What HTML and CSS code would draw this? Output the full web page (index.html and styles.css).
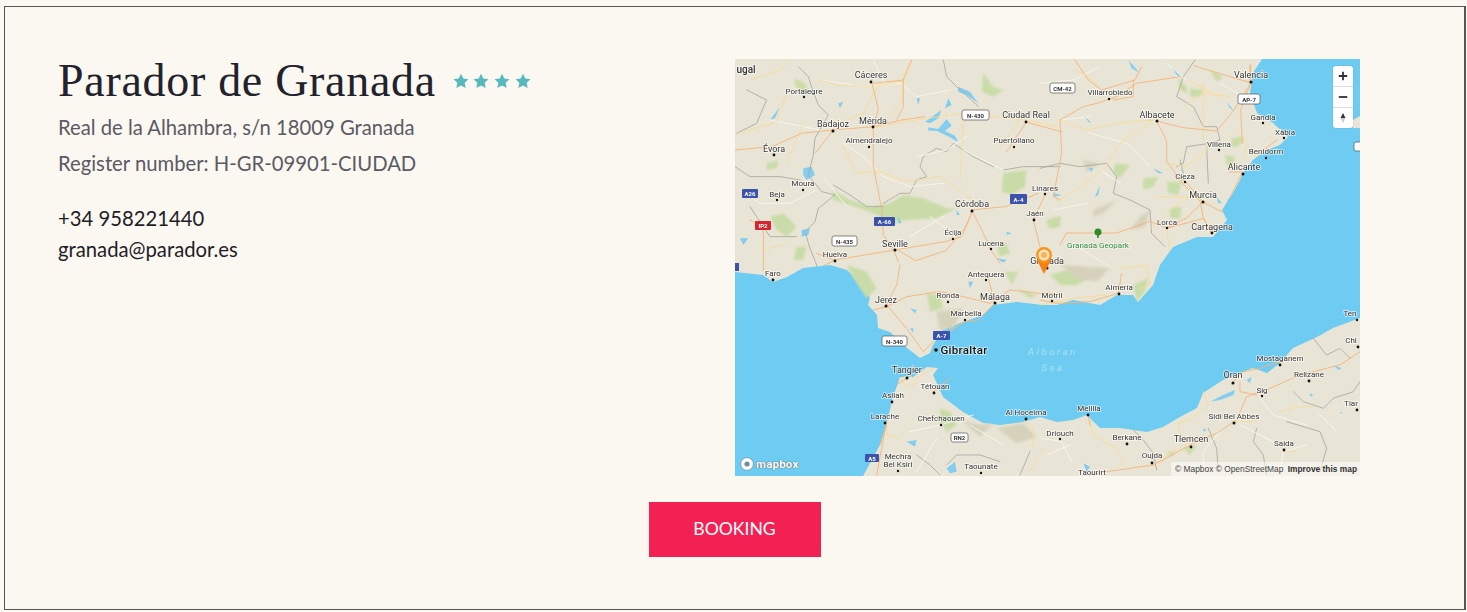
FILE: index.html
```html
<!DOCTYPE html>
<html lang="en">
<head>
<meta charset="utf-8">
<title>Parador de Granada</title>
<link rel="stylesheet" href="styles.css">
</head>
<body>
<main class="frame">
  <div class="columns">
    <section class="info">
      <div class="heading">
        <h1 class="name">Parador de Granada</h1>
        <div class="stars">
          <svg class="star" viewBox="0 0 24 24"><path d="M12 1l3.4 7.2 7.8 1-5.7 5.4 1.5 7.8L12 18.6l-7 3.8 1.5-7.8L.8 9.2l7.8-1z"/></svg>
          <svg class="star" viewBox="0 0 24 24"><path d="M12 1l3.4 7.2 7.8 1-5.7 5.4 1.5 7.8L12 18.6l-7 3.8 1.5-7.8L.8 9.2l7.8-1z"/></svg>
          <svg class="star" viewBox="0 0 24 24"><path d="M12 1l3.4 7.2 7.8 1-5.7 5.4 1.5 7.8L12 18.6l-7 3.8 1.5-7.8L.8 9.2l7.8-1z"/></svg>
          <svg class="star" viewBox="0 0 24 24"><path d="M12 1l3.4 7.2 7.8 1-5.7 5.4 1.5 7.8L12 18.6l-7 3.8 1.5-7.8L.8 9.2l7.8-1z"/></svg>
        </div>
      </div>
      <p class="meta">Real de la Alhambra, s/n 18009 Granada</p>
      <p class="meta">Register number: H-GR-09901-CIUDAD</p>
      <p class="phone">+34 958221440</p>
      <p class="email">granada@parador.es</p>
    </section>
    <section class="map">
      <svg class="map-canvas" viewBox="735 59 625 417" xmlns="http://www.w3.org/2000/svg">
        <rect class="land" x="735" y="59" width="625" height="417"/>

        <g transform="translate(730 50) scale(.3333)">
          <path class="green" d="M820 370l70-10-5 50-40 25-30-10z"/>
          <path class="green" d="M310 420l50 30 60 20 60-10 40-25 60 10 70 30 30 0-60 30-90 5-40 10-60-30-70-25-50-15z"/>
          <path class="green" d="M195 85l30 15 15 35-30-10-15-20z"/>
          <path class="green" d="M760 70l30 40 30 10-30 20-35-15z"/>
          <path class="green" d="M110 340l35-10-5 25-30 5z"/>
          <path class="green" d="M120 500l40-10 40 40-30 30-30-20z"/>
          <path class="green" d="M950 510l40-10v30l-30 5z"/>
          <path class="green" d="M800 590l30-10 10 30-30 10z"/>
          <path class="green" d="M200 590l30 0-10 40-30 0z"/>
          <path class="water" d="M585 215l50-35-10 25-25 15zM595 232l30 5 25-30 15 20-20 15 30 15 10 20-25-15-40-20-25 0z"/>
          <path class="water" d="M685 110l35 15 25 35-35-25-25-10z"/>
          <path class="water" d="M655 145l10 20-20 10z"/>
          <path class="water" d="M220 355l25-5 10 25-25 15-10-15z"/>
          <path class="water" d="M325 160l15-5-10 20zM560 145l10 0-5 20zM120 210l30-40-15 35zM215 540l25-5-5 20-20 5zM30 565l25 0-15 20zM800 625l30 5-10 8zM830 545l15 5-15 5zM505 500l10 20-10 0zM680 480l10 15-10 0z"/>
          <g class="border">
            <path d="M205 50l30 30 15 45 15 40 30 30-40 70-5 50-15 60 40 50 40 10-50 40-10 40-30 30 15 50 20 50 10 35"/>
            <path d="M310 405l50 30 50 35 50 0"/>
            <path d="M460 460l50-30 30 0 20-40 30-10-20-30 10-30 40-25 30 10 20-25 60 40 60 30"/>
            <path d="M640 30l10 50 30 30 45 40 20 20"/>
            <path d="M820 360l60-10 50 0 60 0"/>
            <path d="M15 350l45 30 90 0 60 10M20 250l60-30 30-70-60-30M60 470l60 90 80 0"/>
          </g>
          <g class="white">
            <path d="M270 90l130 20 110-10 50 40 100-20M340 280l60 40 60 60 80 30 100-10M120 210l150 30M700 300l120 60M560 320l90-20 60-40M30 420l60 40 90 0 80-40M600 500l80 60M430 30l40 80M280 380l70 90M540 560l100-60"/>
          </g>
          <g class="yellow">
            <path d="M265 90l60 15 100 5 90-15M340 290l40 80 70-5 80 30 100-15 60 40 50 40M425 235l100-20 170-25 190 20 100 20M700 190l-5 120-5 80M60 90l90-30 30-30M545 30l-25 50-5 70-30 50M100 600l70-20M810 290l60-80M440 110l-40 80-80 30M30 250l110-35 30-90M170 340l50-120"/>
          </g>
          <g class="orange">
            <path d="M425 96l20 80 -15 60 0 110 25 130 5 80 30 40 15 40"/>
            <path d="M15 300l110-10 90-40 95-10 120-10M430 230l85-20 70-10M310 240l-55 70"/>
            <path d="M495 600l150-25 50-15 30-70M727 482l-20 50-60 70-90 30-50-30"/>
            <path d="M730 490l30 60 20 45 30 45M315 630l-60 30M315 630l180-30M890 215l-60 90M887 216l110 30M945 435l-35 75 30 120M725 480l100-10 100-40M430 100l90-10 0 80-20 40M60 510l40 20 0 130M260 610l50 20M545 30l-25 60"/>
          </g>
        </g>

        <g transform="translate(1040 50) scale(.3333)">
          <path class="green" d="M225 340l45 5-30 40-20-15z"/>
          <path class="green" d="M310 385l45-5-15 30-30 10z"/>
          <path class="green" d="M380 395l45 0-10 40-30-5z"/>
          <path class="green" d="M390 475l35-5-5 35-30 0z"/>
          <path class="green" d="M25 510l40-10-15 30-25 0z"/>
          <path class="green" d="M510 60l40 20-20 15z"/>
          <path class="green" d="M415 85l25 25 0 20-20-10z"/>
          <path class="green" d="M575 265l40-5-20 30-20 0zM555 315l30 5-10 35-15-10z"/>
          <path class="green" d="M450 115l40 5-10 20-30 0z"/>
          <path class="hill" d="M160 480l70-30-40 40-30 10zM270 540l30-40 30-20-15 50zM130 330l50 10-40 25z"/>
          <path class="water" d="M265 30l35 40-25-15zM395 50l30 30-15-5zM165 440l15-35-5 30zM130 195l25 25-10-5zM145 355l15 0-5 10zM340 355l30 15-15 0zM40 430l25 5-25 5zM560 155l20 25-10-5zM530 440l15 20-10 0zM565 445l10 15-15 5z"/>
          <g class="border">
            <path d="M0 355l60-15 60 10 80-10 30 40-10 50 50 20 60 30 5 70 40 40M465 30l-35 50 -20 60 50 30 30 60 40 0 10 40-30 10-70 10-10 50 -20 10M420 330l10 40M500 290l5 110"/>
          </g>
          <g class="white">
            <path d="M0 100l100-10 80-40M150 250l110 30 70 70M180 360l60 40M60 210l90-10M110 590l100 60M380 40l70 60M540 100l70 40M40 480l100-20"/>
          </g>
          <g class="yellow">
            <path d="M60 210l80 30 90-20 110-10M110 60l60 40M340 210l-100 70-40 70-90 70-60 35M430 170l60-40 80 10M490 100l0 170M380 340l60 10 60-50 0-20M350 440l100 0M380 530l10 80M330 540l60-60 60-40 60 20M590 250l30 30-10 50M440 90l100 50"/>
          </g>
          <g class="orange">
            <path d="M60 210l5 100-25 130 20 10M60 210l70-40 40-10 60-20 60-40 130-20M105 30l40 60 40 30 100-30 20-40M280 90l0 50-60 10M350 213l30 60 0 60 50 70 50 50 10 50 25 50M350 213l80 20 100 10 50-60 50-80 0-60M488 456l-50-60 -30-20M488 456l60 30 60-120 -40 0M610 370l60-70 40-30M380 534l-50-20-100 35-150 0-20 35M380 534l60-30 50-50M516 550l-25-45-110 30M632 97l-40-10-130-40M632 97l0 -50M632 100l-30 80 5 100"/>
          </g>
        </g>

        <path class="sea" d="M735 272L763 275 773 282 787 277 803 268 830 265 847 270 863 285 870 298 868 305 877 315 878 328 890 332 907 348 920 358 930 353 933 345 943 330 963 322 983 315 993 305 1017 302 1043 305 1057 305 1073 300 1100 305 1117 295 1133 295 1138 302 1153 285 1160 265 1173 247 1197 237 1213 237 1227 220 1222 210 1233 193 1240 180 1243 173 1253 160 1267 150 1280 145 1288 137 1273 123 1257 113 1250 93 1253 73 1262 59 1360 59 1360 318 1333 328 1317 337 1293 348 1280 363 1267 373 1253 368 1240 373 1223 380 1203 393 1197 408 1180 417 1163 427 1147 432 1120 428 1100 428 1087 415 1073 420 1057 422 1040 417 1023 422 1000 425 983 423 963 412 943 397 933 375 938 368 927 367 913 377 900 377 893 397 887 422 880 445 863 476 735 476z"/>
        <path class="land" d="M1353 120l7-4v12l-7 0z"/>

        <g transform="translate(730 265) scale(.3333)">
          <path class="green" d="M350 0l60 20 30 50 -30 30-40-60z"/>
          <path class="green" d="M590 85l40 5 10 40-40 10z"/>
          <path class="green" d="M825 20l40 0-20 40zM860 70l60 20-20 10z"/>
          <path class="green" d="M630 430l30 10 20 40-30 20-20-30z"/>
          <path class="hill" d="M620 140l80-10-30 60-40 5zM700 470l60 10 30-5-40 40zM800 490l80-15 40 40-60 20z"/>
          <path class="water" d="M540 130l20 5-5 10zM650 610l25-20 5 30-20 5zM530 530l30-5-5 20zM540 190l10 0 0 15zM715 50l15 0-10 20z"/>
          <g class="border"><path d="M560 570l40 30 30 30M650 600l30-30 70 0 60 20M900 560l-30 70"/></g>
          <g class="white"><path d="M540 500l90-20 100-30M560 620l60-100M720 480l100 60"/></g>
          <g class="yellow"><path d="M510 340l30-10 20 25-30 10zM560 340l50-30M470 480l0 30 40 10M890 470l20 20 0 60M900 620l40-70"/></g>
          <g class="orange"><path d="M510 0l-10 60-30 60 60 70 50 70 30-30M470 125l-40 10M470 125l60-30 100-15 70 15 80 20 60-40 90 10 60 0M794 115l-50 50-40 5-60 40M440 630l30-160M532 338l-30 20M794 115l-20-80M660 340l-50 40M470 480l-20 60"/></g>
        </g>

        <g transform="translate(1040 265) scale(.3333)">
          <path class="green" d="M30 30l80-25 60 20-60 35-50 0z"/>
          <path class="green" d="M280 60l45-20-10 40-25 30z"/>
          <path class="hill" d="M60 0l150 10-40 40-60-10z"/>
          <path class="green" d="M430 550l40-10-20 30zM380 560l30 0-20 15z"/>
          <path class="water" d="M510 410l40-20 35-15-5 15-40 15zM620 345l15-10-5 20zM130 595l20 10-10 15zM490 490l10 5-10 5zM880 300l25 10-10 5zM810 385l10 5-10 5zM900 440l10 5-10 0z"/>
          <g class="border"><path d="M280 495l30 30 30 40 10 50M505 490l25 60 5 70M650 490l-10 40 30 40 10 60M760 380l30 30 60 20 30-30 60-20 20-30M820 220l40 50 40-20 30 30M740 470l100 30 20 50-20 70"/></g>
          <g class="white"><path d="M600 480l100 50 30 30M720 620l10-60 70-20M660 400l40 50 100 30M490 620l0-60 50-60M830 440l60 60M5 520l60 10 30 60M20 570l70-30"/></g>
          <g class="yellow"><path d="M150 470l10 40 70 40 20 40-20 20M340 600l90-60 90-30M490 380l15 40-50 40-40 15 10 50M580 470l70 0M720 440l50-15 50 0M240 10l80 -10 10 60-30 10M0 120l100-20 100-10M730 560l40 0M720 300l30-30"/></g>
          <g class="orange"><path d="M0 105l50 10 100-5 85-25 10-60M340 600l-140 20-50 10M340 600l130-70 60-25 60-40 30-70 70-25 90-40 120-30 90-60M580 350l30-30 50-10 60-20M600 350l0 30 50 10M145 450l5 30"/></g>
        </g>

        <g class="tree">
          <circle cx="1098" cy="232" r="3.5"/>
          <rect x="1097.2" y="233" width="1.6" height="5"/>
        </g>

        <g class="shield blue">
          <rect x="874" y="217" width="21" height="9" rx="1"/><rect x="1010" y="194" width="17" height="10" rx="1"/><rect x="742" y="189" width="16" height="9" rx="1"/><rect x="933" y="331" width="17" height="9" rx="1"/><rect x="865" y="454" width="14" height="8" rx="1"/><rect x="735" y="263" width="4" height="8"/>
        </g>
        <rect class="red-shield" x="755" y="221" width="16" height="9" rx="1"/>
        <g class="shield-white">
          <rect x="962" y="110" width="27" height="10" rx="2"/><rect x="832" y="236" width="25" height="10" rx="2"/><rect x="1050" y="83" width="25" height="10" rx="2"/><rect x="1238" y="94" width="22" height="10" rx="2"/><rect x="882" y="336" width="25" height="10" rx="2"/><rect x="951" y="433" width="17" height="9" rx="2"/><rect x="1354" y="142" width="8" height="9" rx="2"/>
        </g>
        <g class="shield-txt-w">
          <text x="884.5" y="224">A-66</text><text x="1018.5" y="201.5">A-4</text><text x="750" y="196">A26</text><text x="763" y="228">IP2</text><text x="941.5" y="338">A-7</text><text x="872" y="460.5">A5</text>
        </g>
        <g class="shield-txt-k">
          <text x="975.5" y="117.5">N-430</text><text x="844.5" y="243.5">N-435</text><text x="1062.5" y="90.5">CM-42</text><text x="1249" y="101.5">AP-7</text><text x="894.5" y="343.5">N-340</text><text x="959.5" y="440">RN2</text>
        </g>

        <g class="dots">
          <circle cx="871" cy="82" r="1.4"/><circle cx="804" cy="97" r="1.2"/><circle cx="833" cy="131" r="1.5"/><circle cx="873" cy="127" r="1.4"/><circle cx="869" cy="147" r="1.2"/><circle cx="774" cy="155" r="1.4"/><circle cx="803" cy="190" r="1.2"/><circle cx="777" cy="200" r="1.2"/><circle cx="1026" cy="122" r="1.4"/><circle cx="1014" cy="147" r="1.2"/><circle cx="1045" cy="194" r="1.2"/><circle cx="972" cy="211" r="1.5"/><circle cx="1034" cy="220" r="1.4"/><circle cx="953" cy="239" r="1.2"/><circle cx="991" cy="249" r="1.2"/><circle cx="895" cy="250" r="1.5"/><circle cx="835" cy="261" r="1.4"/><circle cx="773" cy="280" r="1.4"/><circle cx="1047" cy="268" r="1.5"/><circle cx="1109" cy="99" r="1.2"/><circle cx="1251" cy="82" r="1.5"/><circle cx="1157" cy="121" r="1.5"/><circle cx="1263" cy="123" r="1.2"/><circle cx="1284" cy="138" r="1.2"/><circle cx="1219" cy="150" r="1.2"/><circle cx="1266" cy="158" r="1.2"/><circle cx="1243" cy="174" r="1.5"/><circle cx="1185" cy="182" r="1.2"/><circle cx="1203" cy="202" r="1.5"/><circle cx="1167" cy="228" r="1.2"/><circle cx="1212" cy="233" r="1.4"/><circle cx="986" cy="280" r="1.2"/><circle cx="886" cy="306" r="1.5"/><circle cx="948" cy="302" r="1.2"/><circle cx="995" cy="303" r="1.5"/><circle cx="1052" cy="301" r="1.2"/><circle cx="965" cy="320" r="1.2"/><circle cx="936" cy="350" r="1.8"/><circle cx="907" cy="378" r="1.5"/><circle cx="934" cy="393" r="1.4"/><circle cx="892" cy="402" r="1.4"/><circle cx="885" cy="423" r="1.4"/><circle cx="941" cy="425" r="1.2"/><circle cx="1026" cy="419" r="1.4"/><circle cx="898" cy="471" r="1.2"/><circle cx="981" cy="473" r="1.2"/><circle cx="1060" cy="439" r="1.2"/><circle cx="1088" cy="415" r="1.4"/><circle cx="1119" cy="294" r="1.4"/><circle cx="1233" cy="383" r="1.5"/><circle cx="1280" cy="365" r="1.4"/><circle cx="1309" cy="381" r="1.4"/><circle cx="1262" cy="396" r="1.2"/><circle cx="1234" cy="423" r="1.5"/><circle cx="1191" cy="447" r="1.4"/><circle cx="1127" cy="444" r="1.4"/><circle cx="1152" cy="463" r="1.4"/><circle cx="1284" cy="450" r="1.4"/><circle cx="1357" cy="320" r="1.2"/><circle cx="1358" cy="347" r="1.4"/><circle cx="1357" cy="410" r="1.4"/>
        </g>

        <g class="lbl">
          <text class="lbl-big" x="746" y="73">ugal</text>
          <text x="871" y="78">Cáceres</text><text class="lbl-sm" x="804" y="94">Portalegre</text><text x="833" y="127">Badajoz</text><text x="873" y="124">Mérida</text><text class="lbl-sm" x="869" y="143">Almendralejo</text><text x="774" y="152">Évora</text><text class="lbl-sm" x="803" y="186">Moura</text><text class="lbl-sm" x="777" y="197">Beja</text><text x="1026" y="118">Ciudad Real</text><text class="lbl-sm" x="1014" y="143">Puertollano</text><text class="lbl-sm" x="1045" y="191">Linares</text><text x="972" y="207">Córdoba</text><text class="lbl-sm" x="1035" y="216">Jaén</text><text class="lbl-sm" x="953" y="235">Écija</text><text class="lbl-sm" x="991" y="246">Lucena</text><text x="895" y="247">Seville</text><text class="lbl-sm" x="835" y="257">Huelva</text><text class="lbl-sm" x="773" y="276">Faro</text><text x="1047" y="264">Granada</text><text class="lbl-sm" x="1110" y="95">Villarrobledo</text><text x="1251" y="78">Valencia</text><text x="1157" y="118">Albacete</text><text class="lbl-sm" x="1263" y="120">Gandia</text><text class="lbl-sm" x="1285" y="135">Xàbia</text><text class="lbl-sm" x="1219" y="147">Villena</text><text class="lbl-sm" x="1266" y="154">Benidorm</text><text x="1244" y="170">Alicante</text><text class="lbl-sm" x="1185" y="179">Cieza</text><text x="1203" y="198">Murcia</text><text class="lbl-sm" x="1167" y="225">Lorca</text><text x="1212" y="230">Cartagena</text>
          <text class="lbl-sm" x="986" y="277">Antequera</text><text x="886" y="303">Jerez</text><text class="lbl-sm" x="948" y="298">Ronda</text><text x="995" y="300">Málaga</text><text class="lbl-sm" x="1052" y="298">Motril</text><text class="lbl-sm" x="966" y="316">Marbella</text><text class="lbl-gib" x="964" y="354">Gibraltar</text><text x="907" y="373">Tangier</text><text class="lbl-sm" x="935" y="389">Tétouan</text><text class="lbl-sm" x="893" y="398">Asilah</text><text class="lbl-sm" x="885" y="419">Larache</text><text class="lbl-sm" x="941" y="421">Chefchaouen</text><text class="lbl-sm" x="1026" y="415">Al Hoceima</text><text class="lbl-sm" x="898" y="459">Mechra</text><text class="lbl-sm" x="898" y="467">Bel Ksiri</text><text class="lbl-sm" x="981" y="469">Taounate</text><text class="lbl-sm" x="1060" y="436">Driouch</text><text class="lbl-sm" x="1089" y="411">Melilla</text><text class="lbl-sm" x="1119" y="290">Almería</text><text x="1233" y="378">Oran</text><text class="lbl-sm" x="1280" y="361">Mostaganem</text><text class="lbl-sm" x="1309" y="377">Relizane</text><text class="lbl-sm" x="1262" y="393">Sig</text><text class="lbl-sm" x="1234" y="419">Sidi Bel Abbes</text><text x="1191" y="442">Tlemcen</text><text class="lbl-sm" x="1127" y="440">Berkane</text><text class="lbl-sm" x="1152" y="458">Oujda</text><text class="lbl-sm" x="1284" y="446">Saida</text><text class="lbl-sm" x="1092" y="475">Taourirt</text><text class="lbl-sm" x="1350" y="316">Ten</text><text class="lbl-sm" x="1351" y="343">Chl</text><text class="lbl-sm" x="1351" y="406">Tiar</text>
        </g>
        <text class="lbl-park" x="1098" y="248">Granada Geopark</text>
        <text class="lbl-sea" x="1053" y="355">Alboran</text>
        <text class="lbl-sea" x="1053" y="371">Sea</text>

        <g class="pin">
          <path class="pin-tail" d="M1037 260h14l-7 14z"/>
          <circle class="pin-ring" cx="1044" cy="255" r="6.8"/>
          <circle class="pin-core" cx="1044" cy="255" r="3"/>
        </g>
      </svg>

      <div class="zoom-ctrl">
        <div class="zoom-btn">
          <svg class="zoom-icon" viewBox="0 0 20 20"><path d="M10 4v12M4 10h12"/></svg>
        </div>
        <div class="zoom-btn">
          <svg class="zoom-icon" viewBox="0 0 20 20"><path d="M4 10h12"/></svg>
        </div>
        <div class="zoom-btn">
          <svg class="compass-icon" viewBox="0 0 20 20"><path class="needle-up" d="M10 3l3.5 7h-7z"/><path class="needle-down" d="M10 17l3.5-7h-7z"/></svg>
        </div>
      </div>

      <div class="map-logo">
        <svg class="map-logo-mark" viewBox="0 0 16 16"><circle class="logo-outer" cx="8" cy="8" r="6.4"/><circle class="logo-inner" cx="8" cy="8" r="2.6"/></svg>
        <span class="map-logo-text">mapbox</span>
      </div>

      <div class="attrib">© Mapbox © OpenStreetMap <b class="attrib-strong">Improve this map</b></div>
    </section>
  </div>
  <div class="actions">
    <a class="booking" href="#">BOOKING</a>
  </div>
</main>
</body>
</html>
```

FILE: styles.css
```css
html, body {
  margin: 0;
  padding: 0;
  background: #fbf8f1;
}

body {
  height: 612px;
  overflow: hidden;
  padding: 6px 1px 2px 4px;
  box-sizing: border-box;
  font-family: Lato, sans-serif;
}

.frame {
  height: 604px;
  box-sizing: border-box;
  border: 1px solid #555;
  border-right-width: 2px;
  padding-top: 52px;
}

.columns {
  display: grid;
  grid-template-columns: 730px 1fr;
}

.info {
  padding-left: 53px;
}

.heading {
  display: flex;
  align-items: flex-start;
  gap: 17px;
  height: 50px;
}

.name {
  margin: 0;
  font-family: "Liberation Serif", serif;
  font-weight: 400;
  font-size: 46px;
  line-height: 44px;
  letter-spacing: .7px;
  color: #22222c;
  white-space: nowrap;
}

.stars {
  display: flex;
  gap: 4.6px;
  margin-top: 14px;
}

.star {
  width: 16px;
  height: 16px;
  fill: #57b9bd;
}

.meta {
  margin: 0;
  font-size: 20.25px;
  line-height: 36px;
  color: #5a5a64;
}

.phone {
  margin: 19px 0 0;
  font-size: 20.25px;
  line-height: 36px;
  color: #1e1e28;
}

.email {
  margin: -5px 0 0;
  font-size: 20.25px;
  line-height: 36px;
  color: #1e1e28;
}

.map {
  position: relative;
  width: 625px;
  height: 417px;
  overflow: hidden;
}

.map-canvas {
  display: block;
  width: 625px;
  height: 417px;
  filter: blur(.35px);
}

.land { fill: #e9e5d6; }
.sea { fill: #6ecbf1; }
.green { fill: #c9dca8; filter: blur(3px); }
.hill { fill: #d6d1bb; filter: blur(4px); }
.water { fill: #82cdf0; }

.border path, .white path, .yellow path, .orange path {
  fill: none;
  stroke-linejoin: round;
  stroke-linecap: round;
}
.border path { stroke: #a9a9a1; stroke-width: 2.6; }
.white path { stroke: #f8f7f0; stroke-width: 2.6; }
.yellow path { stroke: #f7dc98; stroke-width: 2.8; }
.orange path { stroke: #f4b57c; stroke-width: 2.8; }

.tree circle, .tree rect { fill: #2e8a2a; }

.blue rect { fill: #3d52ab; }
.red-shield { fill: #d4262f; }
.shield-white rect { fill: #fff; stroke: #555; stroke-width: .7; }

.shield-txt-w text, .shield-txt-k text {
  font-family: Roboto, sans-serif;
  font-size: 6px;
  font-weight: 700;
  text-anchor: middle;
}
.shield-txt-w text { fill: #fff; }
.shield-txt-k text { fill: #333; }

.dots circle { fill: #111; }

.lbl text {
  font-family: Roboto, sans-serif;
  font-size: 9px;
  text-anchor: middle;
  fill: #33332f;
  stroke: rgba(255, 255, 255, .7);
  stroke-width: 1.6px;
  paint-order: stroke;
}
.lbl .lbl-sm { font-size: 8px; }
.lbl .lbl-big { font-size: 10px; font-weight: 500; }
.lbl .lbl-gib { font-size: 11.5px; font-weight: 500; fill: #111; letter-spacing: .3px; }

.lbl-park {
  font-family: Roboto, sans-serif;
  font-size: 8px;
  text-anchor: middle;
  fill: #2f8a3a;
  stroke: rgba(255, 255, 255, .6);
  stroke-width: 1.4px;
  paint-order: stroke;
}

.lbl-sea {
  font-family: Roboto, sans-serif;
  font-size: 9.5px;
  font-style: italic;
  letter-spacing: 2.6px;
  text-anchor: middle;
  fill: #aee0f5;
}

.pin-tail { fill: #f57f17; }
.pin-ring { fill: #fbe3bd; stroke: #f7941d; stroke-width: 2.4; }
.pin-core { fill: #f7b45a; }

.zoom-ctrl {
  position: absolute;
  top: 7px;
  right: 7px;
  width: 20px;
  background: #fff;
  border-radius: 3px;
  box-shadow: 0 0 0 1px rgba(0, 0, 0, .04);
}

.zoom-btn {
  height: 20px;
  display: flex;
  align-items: center;
  justify-content: center;
  border-bottom: 1px solid #ddd;
}
.zoom-btn:last-child { border-bottom: 0; }

.zoom-icon {
  width: 14px;
  height: 14px;
  fill: none;
  stroke: #333;
  stroke-width: 2.6;
}

.compass-icon { width: 14px; height: 16px; }
.needle-up { fill: #333; }
.needle-down { fill: #ccc; }

.map-logo {
  position: absolute;
  left: 4px;
  bottom: 4px;
  display: flex;
  align-items: center;
  gap: 1px;
  height: 16px;
}

.map-logo-mark { width: 16px; height: 16px; }
.logo-outer { fill: #fff; stroke: #7f9aa8; stroke-width: 1; }
.logo-inner { fill: #6b8ea0; }

.map-logo-text {
  font-family: Roboto, sans-serif;
  font-size: 11.5px;
  font-weight: 700;
  letter-spacing: .2px;
  color: #fff;
  text-shadow: 0 0 1px #4a5c66, 0 0 1px #4a5c66;
}

.attrib {
  position: absolute;
  right: 0;
  bottom: 0;
  height: 14px;
  padding: 0 3px 0 4px;
  background: rgba(255, 255, 255, .5);
  font-family: "Liberation Sans", sans-serif;
  font-size: 8.4px;
  line-height: 14px;
  color: #444;
  white-space: nowrap;
}

.attrib-strong { margin-left: 2px; color: #333; }

.actions {
  display: flex;
  justify-content: center;
  margin-top: 26px;
}

.booking {
  display: flex;
  align-items: center;
  justify-content: center;
  width: 172px;
  height: 52px;
  padding-bottom: 3px;
  background: #f32053;
  color: #fff;
  font-size: 17.6px;
  text-decoration: none;
}
```
